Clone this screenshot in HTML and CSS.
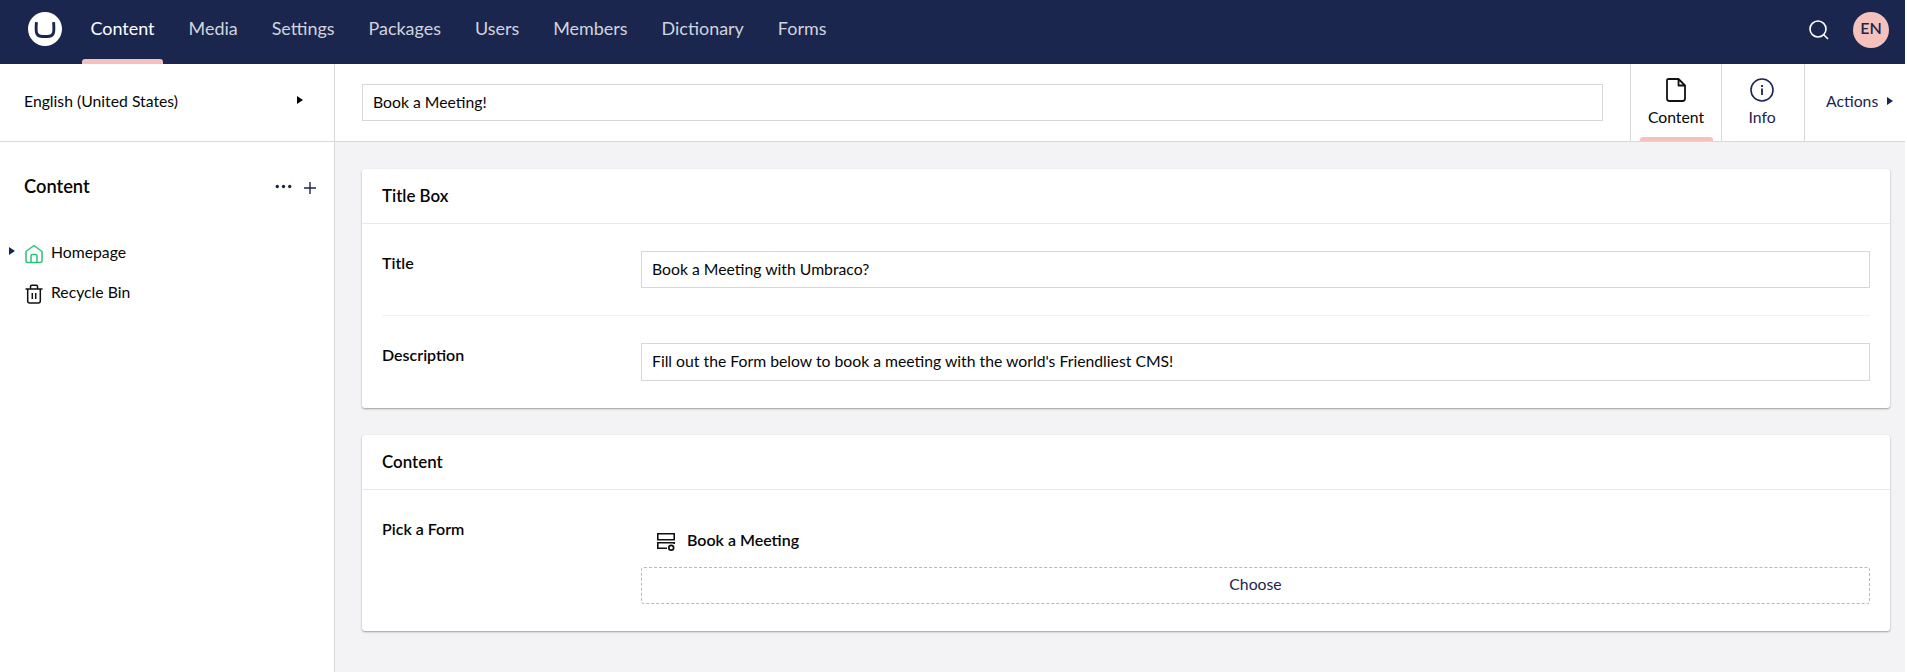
FILE: index.html
```html
<!DOCTYPE html>
<html lang="en">
<head>
<meta charset="utf-8">
<title>Content</title>
<link rel="stylesheet" href="styles.css">
</head>
<body>
<div class="app">
  <header class="topbar">
    <svg class="logo" viewBox="0 0 34 34"><circle cx="17" cy="17" r="17" fill="#fff"/><path d="M8.400 10.200C7.700 20 8 23.500 12.500 24.200Q17 24.900 21.500 24.200C26 23.500 26.300 20 25.600 10.200" fill="none" stroke="#1b264f" stroke-width="2.900"/></svg>
    <nav class="nav">
      <a class="nav-item active">Content</a>
      <a class="nav-item">Media</a>
      <a class="nav-item">Settings</a>
      <a class="nav-item">Packages</a>
      <a class="nav-item">Users</a>
      <a class="nav-item">Members</a>
      <a class="nav-item">Dictionary</a>
      <a class="nav-item">Forms</a>
    </nav>
    <svg class="search" viewBox="0 0 20 20" fill="none" stroke="#fff" stroke-width="1.600"><circle cx="9" cy="9" r="8"/><path d="M14.500 14.500L19 19"/></svg>
    <span class="avatar">EN</span>
  </header>
  <div class="body">
    <aside class="sidebar">
      <div class="language"><span>English (United States)</span><i class="caret"></i></div>
      <div class="tree-head"><span>Content</span>
        <svg class="dots" viewBox="0 0 17 5" fill="#1b264f"><circle cx="2.300" cy="2.500" r="1.700"/><circle cx="8.500" cy="2.500" r="1.700"/><circle cx="14.700" cy="2.500" r="1.700"/></svg>
        <svg class="plus" viewBox="0 0 12 12" stroke="#1b264f" stroke-width="1.400"><path d="M6 0V12M0 6H12"/></svg>
      </div>
      <div class="tree-item">
        <i class="caret"></i>
        <svg class="tree-icon" viewBox="0 0 18 20" fill="none" stroke="#2bc37c" stroke-width="1.500" stroke-linejoin="round"><path d="M1 7.500L9 1.500L17 7.500V16.500Q17 18.500 15 18.500H3Q1 18.500 1 16.500Z"/><path d="M6 18.500V12Q6 10.500 7.500 10.500H10.500Q12 10.500 12 12V18.500"/></svg>
        <span>Homepage</span>
      </div>
      <div class="tree-item">
        <i class="caret hidden"></i>
        <svg class="tree-icon" viewBox="0 0 18 20" fill="none" stroke="#111" stroke-width="1.500" stroke-linejoin="round"><path d="M.500 5H17.500M2.700 5V17Q2.700 19 4.700 19H13.300Q15.300 19 15.300 17V5M5.500 5V2.500Q5.500 1.300 6.700 1.300H11.300Q12.500 1.300 12.500 2.500V5M7.300 9V15M10.700 9V15"/></svg>
        <span>Recycle Bin</span>
      </div>
    </aside>
    <main class="editor">
      <div class="editor-head">
        <div class="input name">Book a Meeting!</div>
        <div class="tab tab-content active">
          <svg viewBox="0 0 24 24" fill="none" stroke="#111" stroke-width="1.800" stroke-linejoin="round"><path d="M4.500 1H14.500L21 7.500V20.500Q21 23 18.500 23H5.500Q3 23 3 20.500V2.500Q3 1 4.500 1ZM14.500 1V7.500H21"/></svg>
          <span>Content</span>
        </div>
        <div class="tab tab-info">
          <svg viewBox="0 0 24 24" fill="none" stroke="#1b264f" stroke-width="1.600"><circle cx="12" cy="12" r="11"/><path d="M12 10.500V17M12 7V9" stroke-width="1.800"/></svg>
          <span>Info</span>
        </div>
        <div class="actions"><span>Actions</span><i class="caret"></i></div>
      </div>
      <div class="content">
        <section class="card">
          <h2>Title Box</h2>
          <div class="fields">
            <div class="field"><label>Title</label><div class="input">Book a Meeting with Umbraco?</div></div>
            <div class="field second"><label>Description</label><div class="input tall">Fill out the Form below to book a meeting with the world's Friendliest CMS!</div></div>
          </div>
        </section>
        <section class="card">
          <h2>Content</h2>
          <div class="fields">
            <div class="field"><label>Pick a Form</label>
              <div class="picker">
                <div class="picked">
                  <svg viewBox="0 0 18 18" fill="none" stroke="#111" stroke-width="1.600"><path d="M.800 .800H17.200V6.800H.800ZM10 15.200H.800V9.700H17.200V11"/><circle cx="14.200" cy="14.700" r="2.400" stroke-width="1.700"/></svg>
                  <span>Book a Meeting</span>
                </div>
                <div class="choose">Choose</div>
              </div>
            </div>
          </div>
        </section>
      </div>
    </main>
  </div>
</div>
</body>
</html>
```
FILE: styles.css
```css
* { box-sizing: border-box; }
body { margin: 0; background: #fff; font: 15.75px/20px Lato, sans-serif; color: #060606; overflow: hidden; }
.app { width: 1905px; height: 672px; display: flex; flex-direction: column; }
.topbar { height: 64px; background: #1b264f; display: flex; align-items: flex-start; padding: 0 16px 0 28px; }
.logo { width: 34px; height: 34px; margin-top: 12px; }
.nav { display: flex; margin-left: 20px; flex: 1; }
.nav-item { height: 64px; padding: 0 8.5px; margin-right: 17px; line-height: 57px; font-size: 17.95px; color: #d1d4dc; }
.nav-item.active { color: #fff; position: relative; }
.nav-item.active::after, .tab.active::after { content: ""; position: absolute; bottom: 0; left: 0; right: 0; height: 5px; background: #f5c1bc; border-radius: 3px 3px 0 0; }
.search { width: 20px; height: 20px; margin: 20px 24px 0 0; }
.avatar { width: 36px; height: 36px; margin-top: 12px; border-radius: 50%; background: #f5c1bc; color: #1b264f; font-weight: 600; font-size: 16px; line-height: 32px; text-align: center; }
.body { display: flex; flex: 1; min-height: 0; }
.sidebar { width: 335px; border-right: 1px solid #d8d7d9; }
.language { height: 78px; border-bottom: 1px solid #d8d7d9; padding: 0 31px 3px 24px; display: flex; align-items: center; justify-content: space-between; }
.caret { border-left: 6px solid currentColor; border-top: 4.5px solid transparent; border-bottom: 4.5px solid transparent; }
.language .caret { margin-top: -2px; }
.tree-head { height: 90px; display: flex; align-items: center; padding: 0 18px 2px 24px; font-weight: 600; font-size: 18.3px; }
.tree-head span { flex: 1; }
.dots { width: 17px; height: 5px; margin-right: 12px; }
.plus { width: 12px; height: 12px; margin-top: 4px; }
.tree-item { height: 40px; display: flex; align-items: center; padding-left: 9px; }
.tree-item .caret { color: #1b264f; margin-top: -2px; }
.tree-item .caret.hidden { visibility: hidden; }
.tree-icon { width: 18px; height: 20px; margin: 3px 8px 0 10px; }
.editor { flex: 1; background: #f3f3f5; min-width: 0; }
.editor-head { height: 78px; background: #fff; border-bottom: 1px solid #d8d7d9; display: flex; padding-left: 27px; }
.input { flex: 1; height: 37px; border: 1px solid #d8d7d9; background: #fff; padding: 0 10px; line-height: 34px; }
.input.tall { height: 38px; }
.name { margin: 20px 27px 0 0; }
.tab { border-left: 1px solid #d8d7d9; display: flex; flex-direction: column; align-items: center; padding-top: 14px; position: relative; }
.tab svg { width: 24px; height: 24px; margin-bottom: 5px; }
.tab-content { width: 91px; }
.tab-info { width: 83px; color: #1b264f; padding-right: 2px; }
.tab.active::after { left: 9px; right: 8px; height: 4px; }
.actions { width: 101px; border-left: 1px solid #d8d7d9; display: flex; align-items: center; padding: 0 12px 3px 21px; justify-content: space-between; color: #1b264f; }
.content { padding: 27px 15px 0 27px; display: flex; flex-direction: column; gap: 27px; }
.card { background: #fff; border-radius: 3px; box-shadow: 0 1px 2px rgba(0,0,0,.36); }
.card h2 { margin: 0; height: 55px; border-bottom: 1px solid #e9e9eb; padding: 0 20px; line-height: 53px; font-size: 16.9px; font-weight: 600; }
.fields { padding: 0 20px; }
.field { display: flex; padding: 27px 0; }
.field.second { border-top: 1px solid #f3f3f5; }
label { width: 259px; font-weight: 600; font-size: 16px; line-height: 24px; }
.picker { flex: 1; }
.picked { height: 50px; display: flex; align-items: center; gap: 12px; padding: 0 0 5px 16px; font-weight: 600; font-size: 16px; }
.picked svg { width: 18px; height: 18px; margin-top: 4px; }
.choose { height: 37px; border: 1px dashed #b9b9bd; border-radius: 3px; text-align: center; line-height: 32px; color: #1b264f; }
```
